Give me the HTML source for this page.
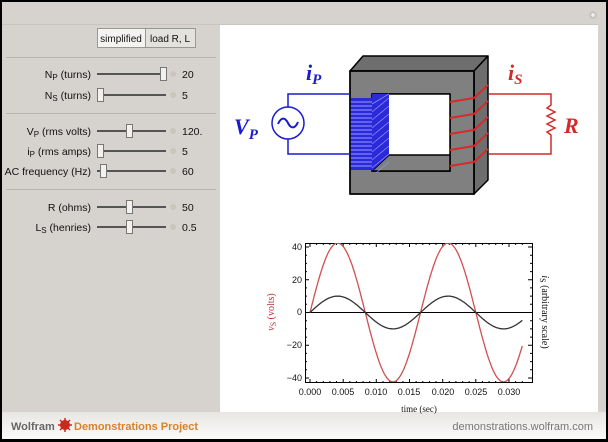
<!DOCTYPE html>
<html><head><meta charset="utf-8"><style>
html,body{margin:0;padding:0;}
body{width:608px;height:442px;background:#000;position:relative;overflow:hidden;font-family:"Liberation Sans",sans-serif;}
#main{position:absolute;left:2px;top:2px;width:604px;height:437px;background:#d6d3ce;}
</style></head><body>
<div id="main"></div>
<svg width="608" height="442" style="position:absolute;left:0;top:0" font-family="Liberation Sans, sans-serif">
<defs>
<linearGradient id="ft" x1="0" y1="0" x2="0" y2="1"><stop offset="0" stop-color="#e8e6e2"/><stop offset="1" stop-color="#fbfbfa"/></linearGradient>
<clipPath id="pc"><rect x="305" y="243" width="227" height="139"/></clipPath>
</defs>
<rect x="220" y="25" width="378" height="387" fill="#fff"/>
<rect x="2" y="412" width="604" height="27" fill="url(#ft)"/>
<line x1="2" y1="24.5" x2="598" y2="24.5" stroke="#c8c5bf"/>
<circle cx="593" cy="15" r="4" fill="#c8c5c0"/><path d="M591 15h4M593 13v4" stroke="#fff" stroke-width="1"/>
<rect x="97.5" y="28.5" width="48" height="19" fill="#f4f3f0" stroke="#9a9893"/>
<rect x="145.5" y="28.5" width="50" height="19" fill="#e4e2dd" stroke="#9a9893"/>
<text x="121" y="42" font-size="10" text-anchor="middle" fill="#111">simplified</text>
<text x="170" y="42" font-size="10" text-anchor="middle" fill="#111">load R, L</text>
<g stroke="#b7b4ae"><line x1="6" y1="57.5" x2="216" y2="57.5"/><line x1="6" y1="113.5" x2="216" y2="113.5"/><line x1="6" y1="189.5" x2="216" y2="189.5"/></g>
<g font-size="10.5" fill="#111">
<text x="91" y="78" text-anchor="end">N<tspan font-size="8" dy="2">P</tspan><tspan dy="-2"> (turns)</tspan></text>
<text x="91" y="99" text-anchor="end">N<tspan font-size="8" dy="2">S</tspan><tspan dy="-2"> (turns)</tspan></text>
<text x="91" y="135" text-anchor="end">V<tspan font-size="8" dy="2">P</tspan><tspan dy="-2"> (rms volts)</tspan></text>
<text x="91" y="155" text-anchor="end">i<tspan font-size="8" dy="2">P</tspan><tspan dy="-2"> (rms amps)</tspan></text>
<text x="91" y="175" text-anchor="end">AC frequency (Hz)</text>
<text x="91" y="211" text-anchor="end">R (ohms)</text>
<text x="91" y="231" text-anchor="end">L<tspan font-size="8" dy="2">S</tspan><tspan dy="-2"> (henries)</tspan></text>
<text x="182" y="78">20</text><text x="182" y="99">5</text><text x="182" y="135">120.</text><text x="182" y="155">5</text><text x="182" y="175">60</text><text x="182" y="211">50</text><text x="182" y="231">0.5</text>
</g>
<g>
<g stroke="#555" stroke-width="2"><line x1="97" y1="74" x2="166" y2="74"/><line x1="97" y1="95" x2="166" y2="95"/><line x1="97" y1="131" x2="166" y2="131"/><line x1="97" y1="151" x2="166" y2="151"/><line x1="97" y1="171" x2="166" y2="171"/><line x1="97" y1="207" x2="166" y2="207"/><line x1="97" y1="227" x2="166" y2="227"/></g>
<g fill="#f2f1ee" stroke="#777">
<rect x="160.5" y="67.5" width="6" height="13"/><rect x="97.5" y="88.5" width="6" height="13"/><rect x="126.5" y="124.5" width="6" height="13"/><rect x="97.5" y="144.5" width="6" height="13"/><rect x="100.5" y="164.5" width="6" height="13"/><rect x="126.5" y="200.5" width="6" height="13"/><rect x="126.5" y="220.5" width="6" height="13"/>
</g>
<g fill="#c9c6c0"><circle cx="173" cy="74" r="3"/><circle cx="173" cy="95" r="3"/><circle cx="173" cy="131" r="3"/><circle cx="173" cy="151" r="3"/><circle cx="173" cy="171" r="3"/><circle cx="173" cy="207" r="3"/><circle cx="173" cy="227" r="3"/></g>
</g>
<g stroke="#000" stroke-width="1.5" stroke-linejoin="round">
<polygon points="350,71 363,56 488,56 474,71" fill="#6e6e6e"/>
<polygon points="474,71 488,56 488,180 474,194" fill="#6e6e6e"/>
<path d="M350 71H474V194H350Z M372 94V171H450V94Z" fill="#808080" fill-rule="evenodd"/>
<rect x="372" y="94" width="78" height="77" fill="#fff"/>
<polygon points="372,171 389,155 450,155 450,171" fill="#808080"/>
<polygon points="372,94 389,94 389,155 372,171" fill="#2a2ad8" stroke="none"/>
</g>
<g stroke="#8c8cff" stroke-width="0.8">
<path d="M372 104l17-10M372 112l17-14M372 120l17-14M372 128l17-14M372 136l17-14M372 144l17-14M372 152l17-14M372 160l17-14M372 168l17-14M376 173l13-11"/>
</g>
<rect x="350" y="98" width="22" height="72" fill="#2a2ad8"/>
<g stroke="#9a9aff" stroke-width="1"><path d="M350 102h22M350 106h22M350 110h22M350 114h22M350 118h22M350 122h22M350 126h22M350 130h22M350 134h22M350 138h22M350 142h22M350 146h22M350 150h22M350 154h22M350 158h22M350 162h22M350 166h22"/></g>
<path d="M350 71H474V194H350Z" fill="none" stroke="#000" stroke-width="1.5"/>
<g stroke="#1a1ad0" stroke-width="1.5" fill="none">
<path d="M350 94H288V107M288 139V154H350"/>
<circle cx="288" cy="123" r="16"/>
<path d="M278 124c3-7 7-7 10-1s7 6 10-1" stroke-width="2"/>
</g>
<text x="234" y="134" font-family="Liberation Serif, serif" font-style="italic" font-weight="bold" font-size="22" fill="#1a1ad0">V<tspan font-size="15" dy="5">P</tspan></text>
<text x="306" y="80" font-family="Liberation Serif, serif" font-style="italic" font-weight="bold" font-size="22" fill="#1a1ad0">i<tspan font-size="15" dy="4">P</tspan></text>
<g stroke="#d42a2a" stroke-width="2" fill="none">
<path d="M450 102L474 98L488 85M450 118L474 114L488 101M450 134L474 130L488 117M450 150L474 146L488 133M450 166L474 162L488 149"/>
<path d="M489 94H551V105l-4 3l8 4l-8 4l8 4l-8 4l8 4l-8 4l4 3V154H489" stroke-width="1.5"/>
</g>
<text x="508" y="80" font-family="Liberation Serif, serif" font-style="italic" font-weight="bold" font-size="22" fill="#d42a2a">i<tspan font-size="15" dy="4">S</tspan></text>
<text x="564" y="133" font-family="Liberation Serif, serif" font-style="italic" font-weight="bold" font-size="22" fill="#d42a2a">R</text>
<rect x="305.5" y="243.5" width="227" height="139" fill="#fff" stroke="#000"/>
<path id="ticks" stroke="#000" stroke-width="1" fill="none" d=""/>
<g clip-path="url(#pc)" fill="none">
<line x1="305" y1="312.5" x2="532" y2="312.5" stroke="#000" stroke-width="1"/>
<polyline id="red" stroke="#d05050" stroke-width="1.3" points=""/>
<polyline id="gry" stroke="#333" stroke-width="1.3" points=""/>
</g>
<g font-size="9" fill="#111" text-anchor="end">
<text x="302" y="250">40</text><text x="302" y="283">20</text><text x="302" y="315">0</text><text x="302" y="348">−20</text><text x="302" y="381">−40</text>
</g>
<g font-size="9" fill="#111" text-anchor="middle">
<text x="310" y="395">0.000</text><text x="343" y="395">0.005</text><text x="376" y="395">0.010</text><text x="409" y="395">0.015</text><text x="443" y="395">0.020</text><text x="476" y="395">0.025</text><text x="509" y="395">0.030</text>
<text x="419" y="412" font-family="Liberation Serif, serif">time (sec)</text>
</g>
<text transform="translate(274,312) rotate(-90)" font-family="Liberation Serif, serif" font-size="10" fill="#c03030" text-anchor="middle"><tspan font-style="italic">v</tspan><tspan font-size="8" dy="2">S</tspan><tspan dy="-2"> (volts)</tspan></text>
<text transform="translate(542,312) rotate(90)" font-family="Liberation Serif, serif" font-size="10" fill="#111" text-anchor="middle"><tspan font-style="italic">i</tspan><tspan font-size="8" dy="2">S</tspan><tspan dy="-2"> (arbitrary scale)</tspan></text>
<text x="11" y="430" font-size="11" font-weight="bold" fill="#666">Wolfram</text>
<g transform="translate(65,425)"><circle r="5" fill="#c8281e"/><circle r="2" fill="#f0c060"/><path d="M0-7V7M-7 0H7M-5-5L5 5M-5 5L5-5" stroke="#c8281e" stroke-width="1.5"/></g>
<text x="74" y="430" font-size="11" font-weight="bold" fill="#d8822a">Demonstrations Project</text>
<text x="593" y="430" font-size="11" fill="#777" text-anchor="end">demonstrations.wolfram.com</text>
</svg>
<script>
var r=[],g=[];
for(var i=0;i<=200;i++){var t=0.032*i/200;var x=310+t*199/0.03;var s=Math.sin(2*Math.PI*60*t);
r.push(x.toFixed(1)+","+(312.5-42.4*s*65.5/40).toFixed(1));
g.push(x.toFixed(1)+","+(312.5-10*s*65.5/40).toFixed(1));}
document.getElementById('red').setAttribute('points',r.join(' '));
document.getElementById('gry').setAttribute('points',g.join(' '));
var d="";
for(var k=0;k<=32;k++){var x=310+k*0.001*199/0.03;var L=(k%5==0)?4:2;d+="M"+x.toFixed(1)+" 383v-"+L+"M"+x.toFixed(1)+" 243v"+L;}
for(var v=-40;v<=40;v+=5){var y=312.5-v*65.5/40;var L=(v%20==0)?4:2;d+="M305 "+y.toFixed(1)+"h"+L+"M532 "+y.toFixed(1)+"h-"+L;}
document.getElementById('ticks').setAttribute('d',d);
</script>
</body></html>
